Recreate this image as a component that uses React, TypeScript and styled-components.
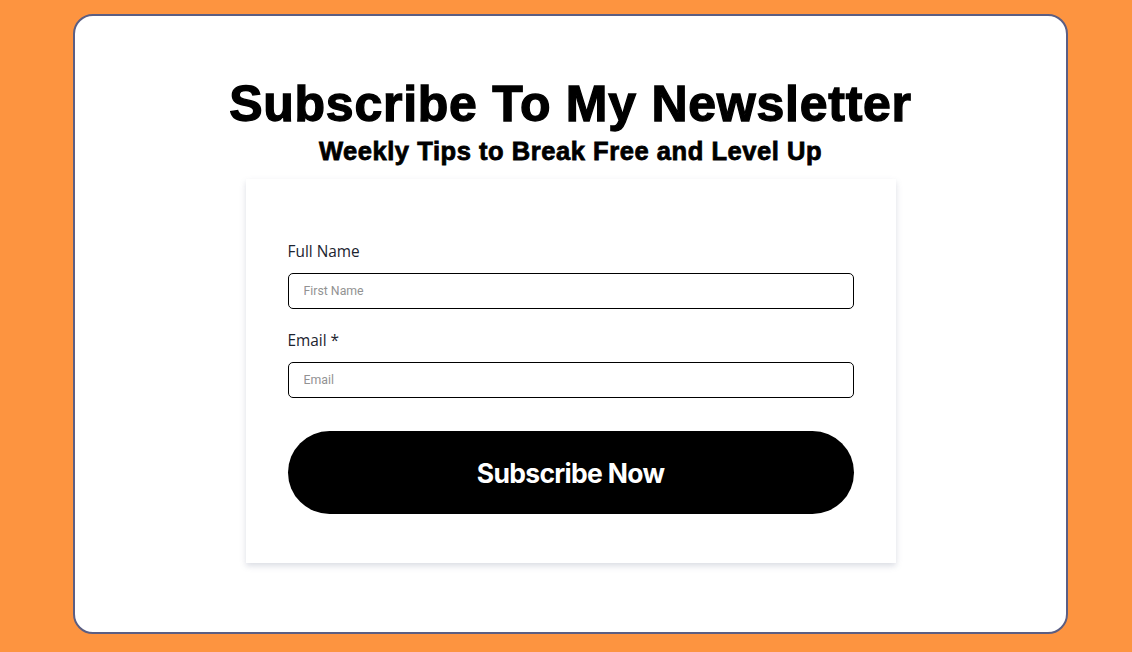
import React from "react";
import styled, { createGlobalStyle } from "styled-components";

const Global = createGlobalStyle`
  html, body { margin: 0; padding: 0; }
  body { background: #fd9440; width: 1132px; height: 652px; overflow: hidden; }
  * { box-sizing: border-box; }
`;

const Page = styled.div`
  padding: 14px 64px 18px 73px;
  height: 652px;
`;

const Frame = styled.div`
  width: 995px;
  height: 620px;
  background: #ffffff;
  border: 2px solid #5b5e83;
  border-radius: 20px;
  display: flex;
  flex-direction: column;
  align-items: center;
  padding-top: 60px;
`;

const Title = styled.h1`
  margin: 0;
  font-family: "Liberation Sans", Arial, sans-serif;
  font-weight: 700;
  font-size: 50px;
  line-height: 56px;
  color: #000;
  letter-spacing: 0.75px;
  -webkit-text-stroke: 1.3px #000;
`;

const Subtitle = styled.h2`
  margin: 4px 0 0;
  font-family: "Liberation Sans", Arial, sans-serif;
  font-weight: 700;
  font-size: 25.5px;
  line-height: 30px;
  color: #000;
  letter-spacing: 0.55px;
  -webkit-text-stroke: 0.8px #000;
`;

const Card = styled.form`
  margin-top: 13px;
  width: 650px;
  background: #fff;
  box-shadow: 0 3px 6px rgba(90, 100, 130, 0.22);
  padding: 63px 42px 49px;
  display: flex;
  flex-direction: column;
`;

const Field = styled.div`
  display: flex;
  flex-direction: column;
  gap: 11px;
  margin-bottom: 22px;
`;

const Label = styled.label`
  font-family: "Open Sans", sans-serif;
  font-size: 15.4px;
  line-height: 20px;
  color: #1c2430;
`;

const Input = styled.input`
  height: 36px;
  width: 100%;
  border: 1px solid #000;
  border-radius: 5px;
  padding: 0 15px;
  font-family: Roboto, sans-serif;
  font-size: 12.3px;
  outline: none;
  &::placeholder { color: #929292; }
`;

const Button = styled.button`
  margin-top: 11px;
  height: 83px;
  width: 100%;
  border: none;
  border-radius: 42px;
  background: #000;
  color: #fff;
  font-family: Inter, Roboto, sans-serif;
  font-weight: 700;
  font-size: 26.5px;
  letter-spacing: -0.7px;
  cursor: pointer;
`;

export default function App() {
  return (
    <>
      <Global />
      <Page>
        <Frame>
          <Title>Subscribe To My Newsletter</Title>
          <Subtitle>Weekly Tips to Break Free and Level Up</Subtitle>
          <Card onSubmit={(e) => e.preventDefault()}>
            <Field>
              <Label>Full Name</Label>
              <Input placeholder="First Name" />
            </Field>
            <Field>
              <Label>Email *</Label>
              <Input placeholder="Email" />
            </Field>
            <Button type="submit">Subscribe Now</Button>
          </Card>
        </Frame>
      </Page>
    </>
  );
}
